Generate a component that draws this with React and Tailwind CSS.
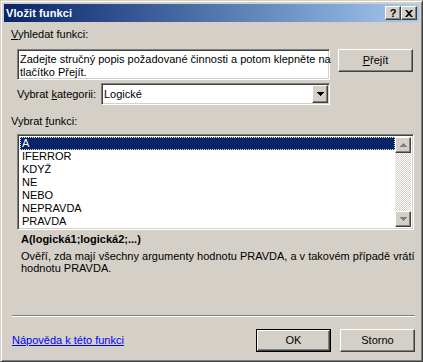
import React from 'react';

const raised =
  'bg-[#d4d0c8] border border-t-white border-l-white border-r-[#404040] border-b-[#404040] shadow-[inset_-1px_-1px_0_#808080,inset_1px_1px_0_#d4d0c8]';
const sunken =
  'bg-white border border-t-[#808080] border-l-[#808080] border-r-white border-b-white shadow-[inset_1px_1px_0_#404040,inset_-1px_-1px_0_#d4d0c8]';

function Arrow({ up, color = '#000' }) {
  return (
    <svg width="7" height="4" viewBox="0 0 7 4">
      {up ? (
        <path d="M3 0h1v1h1v1h1v1h1v1H0V3h1V2h1V1h1z" fill={color} />
      ) : (
        <path d="M0 0h7v1H6v1H5v1H4v1H3V3H2V2H1V1H0z" fill={color} />
      )}
    </svg>
  );
}

const functions = ['A', 'IFERROR', 'KDYŽ', 'NE', 'NEBO', 'NEPRAVDA', 'PRAVDA'];

export default function App() {
  return (
    <div className="w-[423px] h-[362px] bg-[#d4d0c8] font-['Liberation_Sans',Arial,sans-serif] text-[11px] leading-[13px] text-black">
      <div className="w-full h-full flex flex-col p-[3px] border border-t-[#d4d0c8] border-l-[#d4d0c8] border-r-[#404040] border-b-[#404040] shadow-[inset_1px_1px_0_#fff,inset_-1px_-1px_0_#808080]">
        {/* Title bar */}
        <div className="h-[18px] flex items-center justify-between pl-[2px] pr-[2px] bg-gradient-to-r from-[#0a246a] to-[#a6caf0]">
          <span className="text-white font-bold text-[11px] tracking-[0.1px]">Vložit funkci</span>
          <div className="flex">
            <div className={`${raised} w-[16px] h-[14px] flex items-center justify-center font-bold text-[11px] leading-none`}>?</div>
            <div className={`${raised} w-[16px] h-[14px] flex items-center justify-center`}>
              <svg width="8" height="7" viewBox="0 0 8 7">
                <path d="M0 0h2l2 2 2-2h2L5 3.5 8 7H6L4 5 2 7H0l3-3.5z" fill="#000" />
              </svg>
            </div>
          </div>
        </div>

        {/* Body */}
        <div className="flex flex-col flex-1 px-[4px]">
          <div className="mt-[6px] pl-[3px]">
            <span className="underline">V</span>yhledat funkci:
          </div>

          <div className="mt-[8px] flex items-start pl-[9px]">
            <div className={`${sunken} w-[313px] h-[31px] pt-[3px] pl-[2px] whitespace-nowrap`}>
              Zadejte stručný popis požadované činnosti a potom klepněte na
              <br />
              tlačítko Přejít.
            </div>
            <div className={`${raised} ml-[8px] w-[75px] h-[23px] flex items-center justify-center`}>
              <span>
                <span className="underline">P</span>řejít
              </span>
            </div>
          </div>

          <div className="mt-[3px] flex items-center pl-[9px]">
            <span className="w-[84px]">
              Vybrat <span className="underline">k</span>ategorii:
            </span>
            <div className={`${sunken} w-[229px] h-[22px] flex items-center justify-between pl-[2px] pr-[1px]`}>
              <span>Logické</span>
              <div className={`${raised} w-[16px] h-[18px] flex items-center justify-center`}>
                <Arrow />
              </div>
            </div>
          </div>

          <div className="mt-[10px] pl-[3px]">
            Vybrat <span className="underline">f</span>unkci:
          </div>

          <div className={`${sunken} mt-[6px] ml-[9px] w-[397px] h-[96px] flex p-[2px]`}>
            <div className="flex-1 flex flex-col">
              {functions.map((f, i) => (
                <div
                  key={f}
                  className={
                    i === 0
                      ? 'h-[13px] pl-[1px] bg-[#0a246a] text-white border border-dotted border-[#e8e8c0] leading-[11px]'
                      : 'h-[13px] pl-[2px]'
                  }
                >
                  {f}
                </div>
              ))}
            </div>
            <div className="w-[16px] flex flex-col bg-[repeating-conic-gradient(#d4d0c8_0%_25%,#ffffff_0%_50%)] bg-[length:2px_2px]">
              <div className={`${raised} h-[16px] flex items-center justify-center`}>
                <Arrow up color="#808080" />
              </div>
              <div className="flex-1" />
              <div className={`${raised} h-[16px] flex items-center justify-center`}>
                <Arrow color="#808080" />
              </div>
            </div>
          </div>

          <div className="mt-[3px] pl-[13px] font-bold">A(logická1;logická2;...)</div>
          <div className="mt-[4px] pl-[13px] leading-[12px] whitespace-nowrap">
            Ověří, zda mají všechny argumenty hodnotu PRAVDA, a v takovém případě vrátí
            <br />
            hodnotu PRAVDA.
          </div>

          <div className="mt-auto ml-[4px] mr-[0px] h-[2px] border-t border-t-[#808080] border-b border-b-white" />

          <div className="mt-[12px] mb-[6px] flex items-center">
            <a className="pl-[4px] text-[#0000ff] underline flex-1">Nápověda k této funkci</a>
            <div className="w-[75px] h-[23px] border border-black">
              <div className={`${raised} w-full h-full flex items-center justify-center`}>OK</div>
            </div>
            <div className={`${raised} ml-[9px] w-[75px] h-[23px] flex items-center justify-center`}>Storno</div>
          </div>
        </div>
      </div>
    </div>
  );
}
